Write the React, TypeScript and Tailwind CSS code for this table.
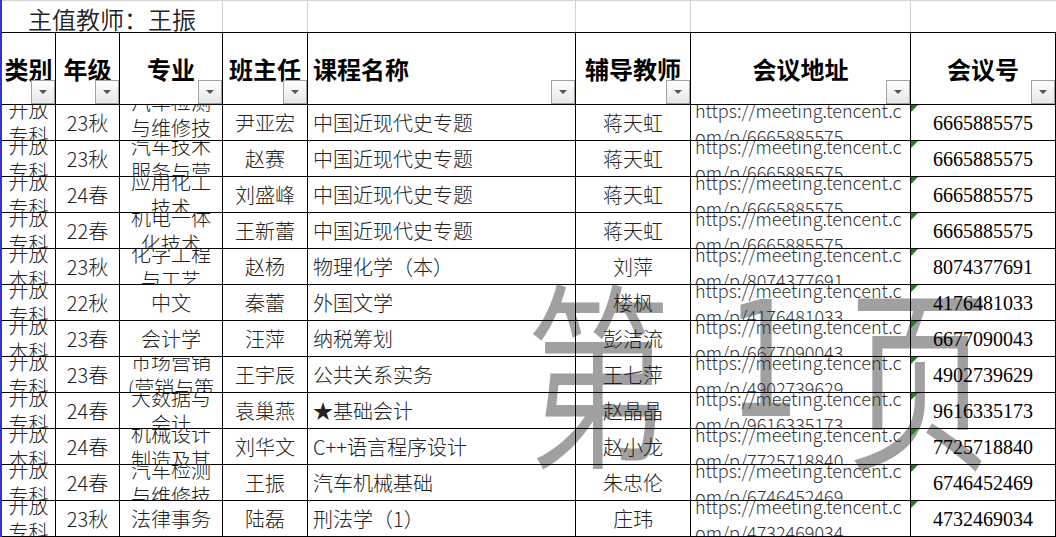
import React from "react";

const grid =
  "grid grid-cols-[54px_64px_103px_85px_268px_115px_220px_145px]";

type Row = {
  kind: string;
  grade: string;
  major: string[];
  majorTop?: number;
  head: string;
  course: string;
  tutor: string;
  id: string;
};

const rows: Row[] = [
  { kind: "专科", grade: "23秋", major: ["汽车检测", "与维修技", "术"], majorTop: -16, head: "尹亚宏", course: "中国近现代史专题", tutor: "蒋天虹", id: "6665885575" },
  { kind: "专科", grade: "23秋", major: ["汽车技术", "服务与营", "销"], head: "赵赛", course: "中国近现代史专题", tutor: "蒋天虹", id: "6665885575" },
  { kind: "专科", grade: "24春", major: ["应用化工", "技术"], head: "刘盛峰", course: "中国近现代史专题", tutor: "蒋天虹", id: "6665885575" },
  { kind: "专科", grade: "22春", major: ["机电一体", "化技术"], head: "王新蕾", course: "中国近现代史专题", tutor: "蒋天虹", id: "6665885575" },
  { kind: "本科", grade: "23秋", major: ["化学工程", "与工艺"], head: "赵杨", course: "物理化学（本）", tutor: "刘萍", id: "8074377691" },
  { kind: "专科", grade: "22秋", major: ["中文"], head: "秦蕾", course: "外国文学", tutor: "楼枫", id: "4176481033" },
  { kind: "本科", grade: "23春", major: ["会计学"], head: "汪萍", course: "纳税筹划", tutor: "彭洁流", id: "6677090043" },
  { kind: "专科", grade: "23春", major: ["市场营销", "(营销与策", "划)"], head: "王宇辰", course: "公共关系实务", tutor: "王七萍", id: "4902739629" },
  { kind: "专科", grade: "24春", major: ["大数据与", "会计"], head: "袁巢燕", course: "★基础会计", tutor: "赵晶晶", id: "9616335173" },
  { kind: "本科", grade: "24春", major: ["机械设计", "制造及其", "自动化"], head: "刘华文", course: "C++语言程序设计", tutor: "赵小龙", id: "7725718840" },
  { kind: "专科", grade: "24春", major: ["汽车检测", "与维修技", "术"], head: "王振", course: "汽车机械基础", tutor: "朱忠伦", id: "6746452469" },
  { kind: "专科", grade: "23秋", major: ["法律事务"], head: "陆磊", course: "刑法学（1）", tutor: "庄玮", id: "4732469034" },
];

const headers = [
  { label: "类别", align: "justify-center" },
  { label: "年级", align: "justify-center" },
  { label: "专业", align: "justify-center" },
  { label: "班主任", align: "justify-center" },
  { label: "课程名称", align: "justify-start pl-[5px]" },
  { label: "辅导教师", align: "justify-center" },
  { label: "会议地址", align: "justify-center" },
  { label: "会议号", align: "justify-center" },
];

function FilterButton() {
  return (
    <div className="absolute right-0 bottom-0 flex h-[24px] w-[24px] items-center justify-center border border-[#a3a3a3] bg-gradient-to-b from-white to-[#e6e6e6]">
      <div className="h-0 w-0 border-x-[4px] border-t-[4px] border-x-transparent border-t-[#555]" />
    </div>
  );
}

function Lines({ lines, top = -8, center = true }: { lines: string[]; top?: number; center?: boolean }) {
  return (
    <div
      className={`w-full self-start leading-[26px] whitespace-nowrap ${center ? "text-center" : "text-left"}`}
      style={{ marginTop: top }}
    >
      {lines.map((l, i) => (
        <div key={i}>{l}</div>
      ))}
    </div>
  );
}

const cell = "relative flex h-[36px] overflow-hidden border-r border-b border-black";

export default function App() {
  return (
    <div className="relative h-[537px] w-[1056px] overflow-hidden border-l-2 border-[#3434c8] bg-white font-['Noto_Sans_CJK_SC',sans-serif] text-[#222]">
      {/* watermark */}
      <div className="pointer-events-none absolute inset-0 z-0 text-[#a0a0a0]">
        <span className="absolute top-[296px] left-[524px] scale-y-[1.38] text-[145px] leading-[140px] font-[350]">第</span>
        <span className="absolute top-[291px] left-[726px] scale-y-[1.4] font-['DejaVu_Sans',sans-serif] text-[114px] leading-[140px] font-normal">1</span>
        <span className="absolute top-[298px] left-[845px] scale-y-[1.38] text-[145px] leading-[140px] font-[350]">页</span>
      </div>

      <div className="relative z-10">
        {/* title row */}
        <div className={`${grid} h-[32px] border-t border-[#d4d4d4]`}>
          <div className="col-span-3 flex items-center justify-center border-r border-[#d4d4d4] text-[24px] font-[350]">
            主值教师：王振
          </div>
          <div className="border-r border-[#d4d4d4]" />
          <div className="border-r border-[#d4d4d4]" />
          <div className="border-r border-[#d4d4d4]" />
          <div className="border-r border-[#d4d4d4]" />
          <div />
        </div>

        {/* header */}
        <div className={grid}>
          {headers.map((h) => (
            <div
              key={h.label}
              className={`relative flex h-[73px] items-center border-t border-r border-b border-black text-[24px] font-bold text-black ${h.align}`}
            >
              <span className="mt-[1px] whitespace-nowrap">{h.label}</span>
              <FilterButton />
            </div>
          ))}
        </div>

        {/* data */}
        {rows.map((r, i) => (
          <div key={i} className={`${grid} text-[20px] font-light`}>
            <div className={cell}>
              <Lines lines={["开放", r.kind]} />
            </div>
            <div className={`${cell} items-center justify-center`}>{r.grade}</div>
            <div className={`${cell} ${r.major.length > 1 ? "" : "items-center justify-center"}`}>
              {r.major.length > 1 ? <Lines lines={r.major} top={r.majorTop ?? -8} /> : r.major[0]}
            </div>
            <div className={`${cell} items-center justify-center`}>{r.head}</div>
            <div className={`${cell} items-center pl-[5px] whitespace-nowrap`}>{r.course}</div>
            <div className={`${cell} items-center justify-center`}>{r.tutor}</div>
            <div className={`${cell} pl-[4px] text-[18px] text-[#333]`}>
              <Lines lines={["https://meeting.tencent.c", `om/p/${r.id}`]} center={false} />
            </div>
            <div className={`${cell} items-center justify-center font-['Liberation_Serif',serif] font-normal text-black`}>
              <div className="absolute top-0 left-0 h-0 w-0 border-t-[7px] border-r-[7px] border-t-[#1d7f1d] border-r-transparent" />
              {r.id}
            </div>
          </div>
        ))}
      </div>
    </div>
  );
}
